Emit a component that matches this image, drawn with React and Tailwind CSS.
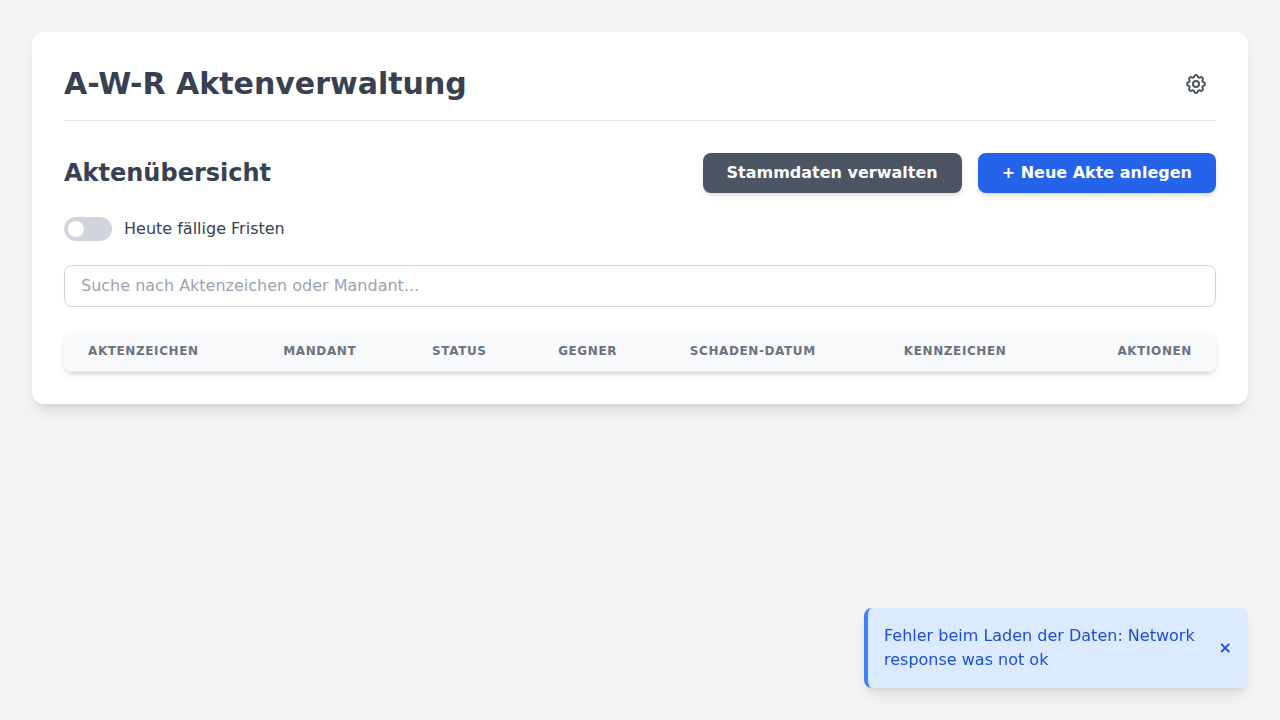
import { useState } from "react";

const COLUMNS = ["Aktenzeichen", "Mandant", "Status", "Gegner", "Schaden-Datum", "Kennzeichen"];

function PageHeader() {
  return (
    <header className="mb-8 flex items-center justify-between border-b border-[#e5e7eb] pb-4">
      <h1 className="text-3xl font-bold">A-W-R Aktenverwaltung</h1>
      <button type="button" aria-label="Einstellungen" className="rounded-full p-2 text-[#4b5563] hover:bg-[#e5e7eb]">
        <svg className="h-6 w-6" fill="none" viewBox="0 0 24 24" stroke="currentColor" strokeWidth="2" strokeLinecap="round" strokeLinejoin="round" aria-hidden="true">
          <path d="M10.325 4.317c.426-1.756 2.924-1.756 3.35 0a1.724 1.724 0 002.573 1.066c1.543-.94 3.31.826 2.37 2.37a1.724 1.724 0 001.065 2.572c1.756.426 1.756 2.924 0 3.35a1.724 1.724 0 00-1.066 2.573c.94 1.543-.826 3.31-2.37 2.37a1.724 1.724 0 00-2.572 1.065c-.426 1.756-2.924 1.756-3.35 0a1.724 1.724 0 00-2.573-1.066c-1.543.94-3.31-.826-2.37-2.37a1.724 1.724 0 00-1.065-2.572c-1.756-.426-1.756-2.924 0-3.35a1.724 1.724 0 001.066-2.573c-.94-1.543.826-3.31 2.37-2.37.996.608 2.296.07 2.572-1.065z" />
          <path d="M15 12a3 3 0 11-6 0 3 3 0 016 0z" />
        </svg>
      </button>
    </header>
  );
}

function Toast({ message, onClose }) {
  return (
    <div role="alert" className="fixed right-8 bottom-8 flex w-full max-w-sm items-center justify-between rounded-lg border-l-4 border-[#3b82f6] bg-[#dbeafe] p-4 text-[#1d4ed8] shadow-lg">
      <p>{message}</p>
      <button type="button" aria-label="Schließen" onClick={onClose} className="ml-4 font-bold">
        ×
      </button>
    </div>
  );
}

export default function App() {
  const [dueToday, setDueToday] = useState(false);
  const [query, setQuery] = useState("");
  const [toastOpen, setToastOpen] = useState(true);

  return (
    <div className="min-h-screen bg-[#f3f4f6] p-8 font-['DejaVu_Sans',sans-serif] text-[#374151]">
      <main className="rounded-xl bg-white p-8 shadow-lg">
        <PageHeader />

        <div className="mb-6 flex flex-wrap items-center justify-between gap-4">
          <h2 className="text-2xl font-semibold">Aktenübersicht</h2>
          <div className="flex gap-4">
            <button type="button" className="rounded-lg bg-[#4b5563] px-6 py-2 font-semibold text-white shadow-md hover:bg-[#374151]">
              Stammdaten verwalten
            </button>
            <button type="button" className="rounded-lg bg-[#2563eb] px-6 py-2 font-semibold text-white shadow-md hover:bg-[#1d4ed8]">
              + Neue Akte anlegen
            </button>
          </div>
        </div>

        <div className="mb-6 flex items-center gap-3">
          <input
            id="due-today"
            type="checkbox"
            role="switch"
            checked={dueToday}
            onChange={(e) => setDueToday(e.target.checked)}
            className="flex h-6 w-12 cursor-pointer appearance-none items-center rounded-full bg-[#d1d5db] p-1 before:h-4 before:w-4 before:rounded-full before:bg-white before:transition-transform checked:bg-[#2563eb] checked:before:translate-x-6"
          />
          <label htmlFor="due-today" className="cursor-pointer">Heute fällige Fristen</label>
        </div>

        <input
          type="search"
          aria-label="Aktensuche"
          placeholder="Suche nach Aktenzeichen oder Mandant..."
          value={query}
          onChange={(e) => setQuery(e.target.value)}
          className="mb-6 block w-full rounded-lg border border-[#d1d5db] px-4 py-2 shadow-xs placeholder:text-[#9ca3af]"
        />

        <div className="overflow-hidden rounded-lg bg-white shadow-md">
          <table className="w-full">
            <thead className="border-b border-[#e5e7eb] bg-[#f9fafb] text-xs tracking-wider text-[#6b7280] uppercase">
              <tr>
                {COLUMNS.map((name) => (
                  <th key={name} scope="col" className="px-6 py-3 text-left font-semibold">{name}</th>
                ))}
                <th scope="col" className="px-6 py-3 text-right font-semibold">Aktionen</th>
              </tr>
            </thead>
            <tbody />
          </table>
        </div>
      </main>

      {toastOpen && (
        <Toast message="Fehler beim Laden der Daten: Network response was not ok" onClose={() => setToastOpen(false)} />
      )}
    </div>
  );
}
